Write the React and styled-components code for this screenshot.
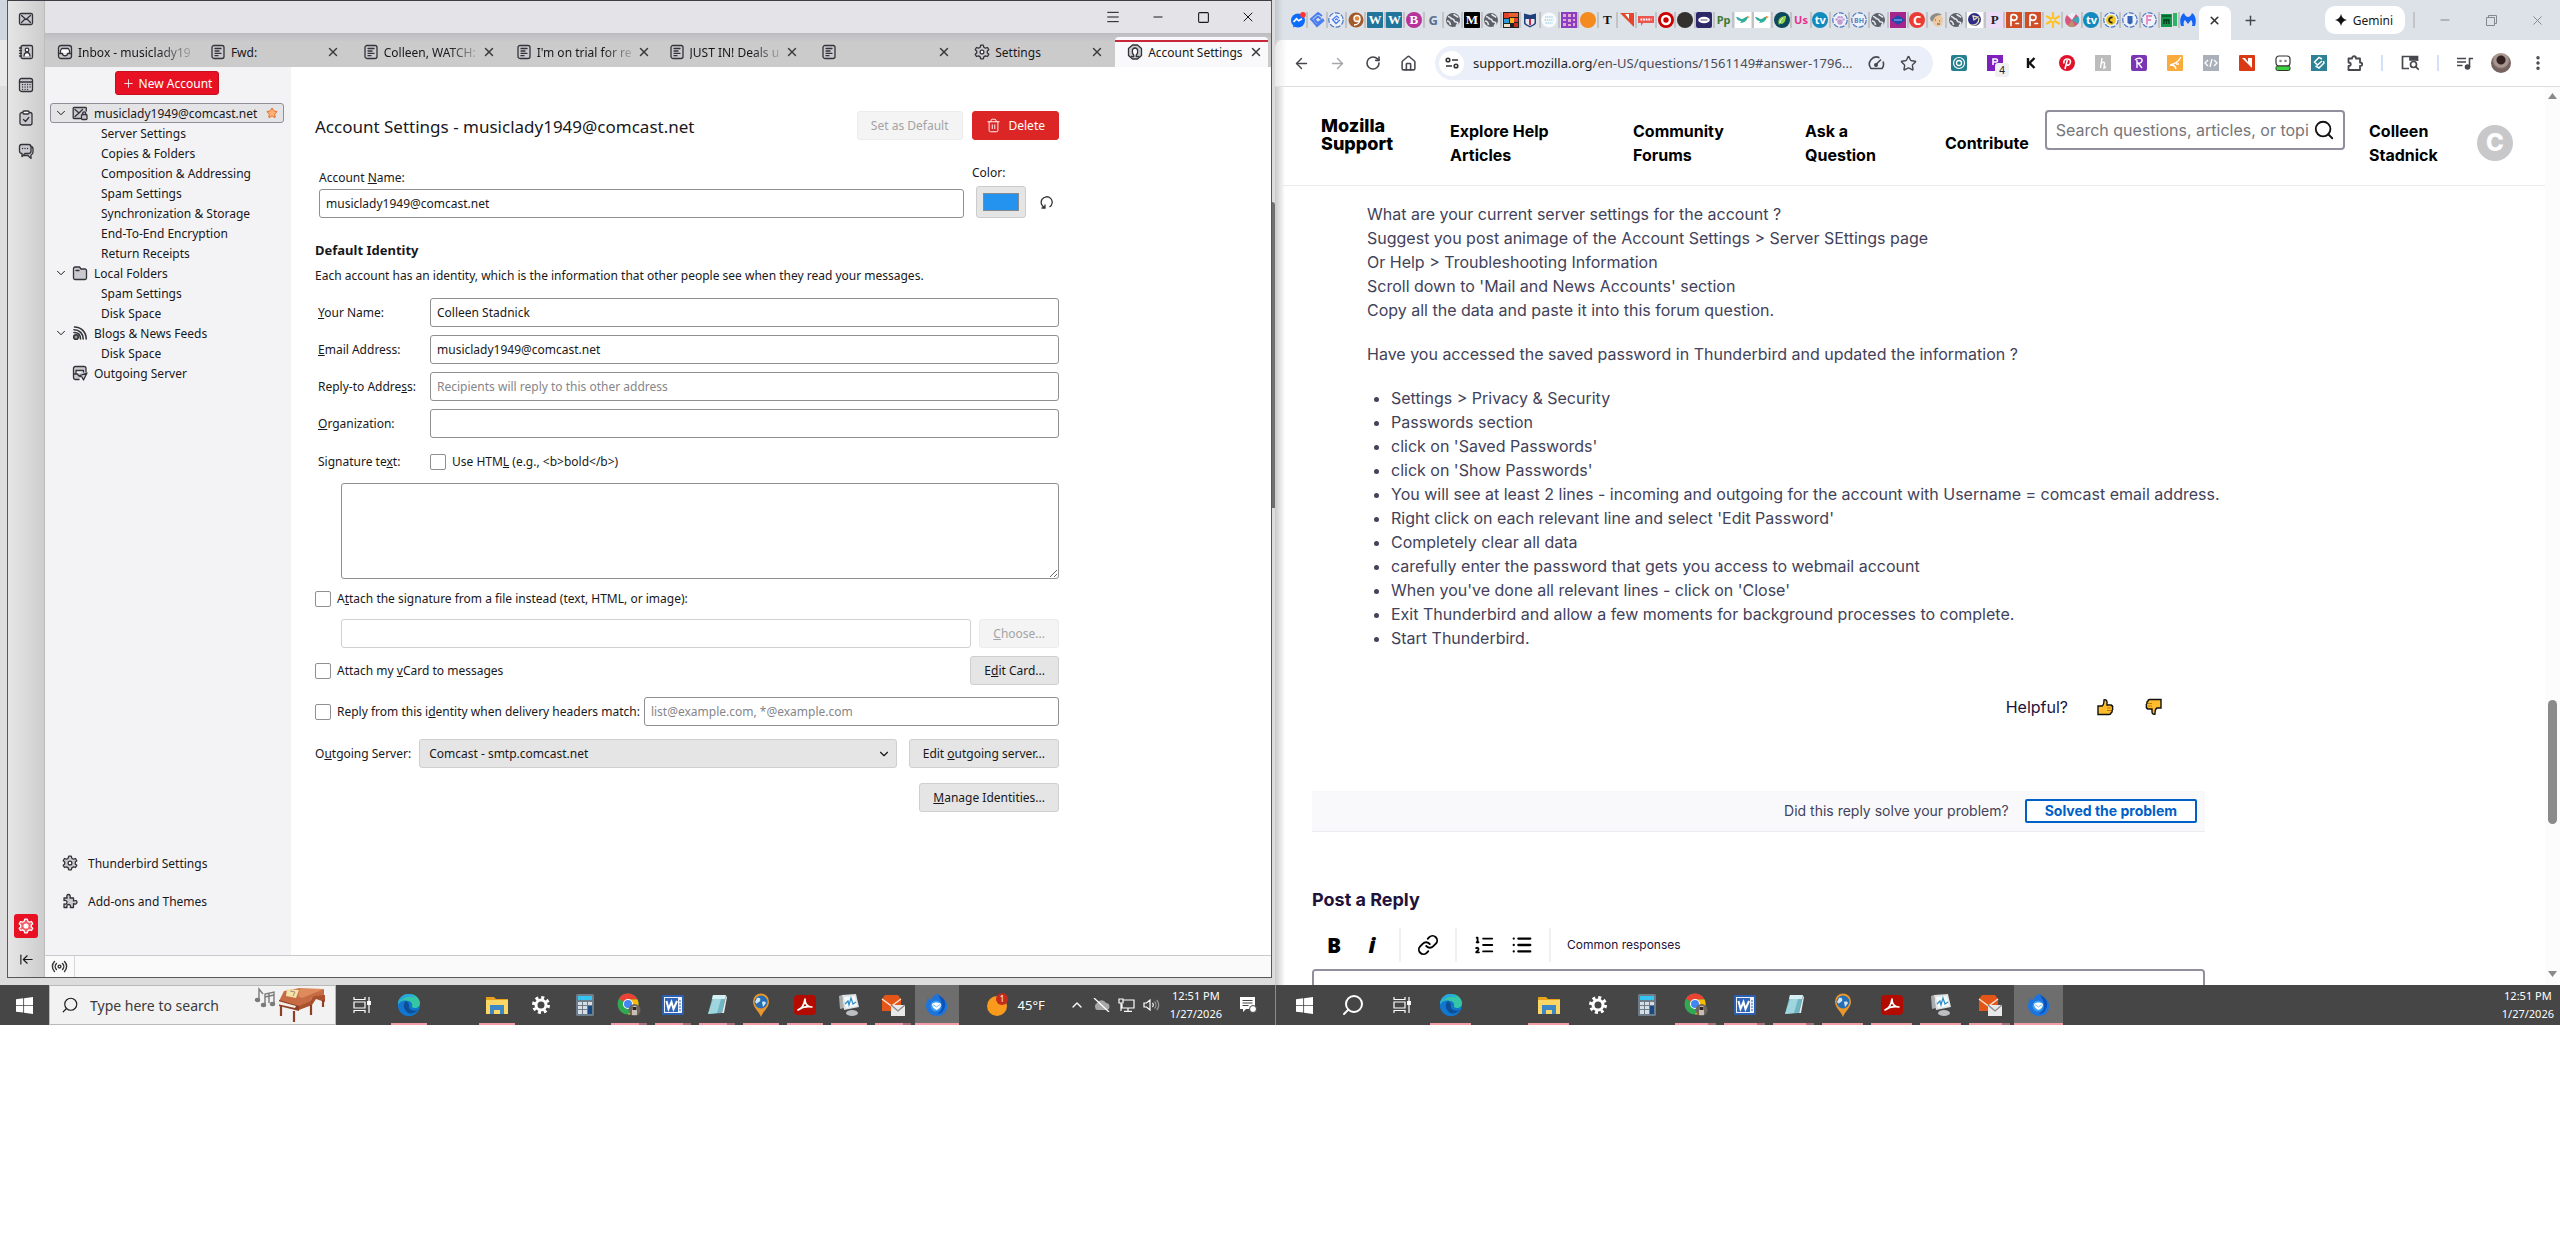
import styled, { createGlobalStyle, css } from "styled-components";
import {
    ArrowLeft, ArrowRight, ChevronDown, ChevronUp, Home, List, ListOrdered, Link,
    Menu, Minus, MoreVertical, Plus, Puzzle, RotateCw, Search, Square,
    Star, Trash2, X, ArrowLeftToLine, Radio,
} from "lucide-react";

const uiFont = `"Noto Sans", "Open Sans", sans-serif`;
const webFont = `Inter, "Liberation Sans", sans-serif`;

/* ---------- data ---------- */

const mailTabs = [
    { icon: "inbox", label: "Inbox - musiclady19", fade: true, fixed: true },
    { icon: "page", label: "Fwd:" },
    { icon: "page", label: "Colleen, WATCH:", fade: true },
    { icon: "page", label: "I'm on trial for re", fade: true },
    { icon: "page", label: "JUST IN! Deals u", fade: true },
    { icon: "page", label: "" },
    { icon: "gear", label: "Settings" },
    { icon: "account", label: "Account Settings", active: true },
];

const accountTree = [
    { icon: "mailLock", label: "musiclady1949@comcast.net", open: true, selected: true },
    { label: "Server Settings" },
    { label: "Copies & Folders" },
    { label: "Composition & Addressing" },
    { label: "Spam Settings" },
    { label: "Synchronization & Storage" },
    { label: "End-To-End Encryption" },
    { label: "Return Receipts" },
    { icon: "folder", label: "Local Folders", open: true },
    { label: "Spam Settings" },
    { label: "Disk Space" },
    { icon: "feed", label: "Blogs & News Feeds", open: true },
    { label: "Disk Space" },
    { icon: "outbox", label: "Outgoing Server" },
];

const favicons = [
    "messenger", "swirl", "swirlRing", "nine", ["W", "#21759b", "#fff", 0, 1], ["W", "#21759b", "#fff", 0, 1],
    ["B", "#b8329b", "#fff", 1, 1], ["G", "", "#5b6f91"], "globe", ["M", "#000", "#fff", 0, 1], "globe", "blocks", "shield", "paleDots",
    "grid", ["", "#f58a1f", "#fff", 1], ["T", "", "#111", 0, 1], "flag", "sale", "target", ["", "#33302d", "#fff", 1], "oval",
    ["Pp", "", "#3c7a35"], "bird", "bird", "leaf", ["Us", "", "#ec2f8c"], ["tv", "#118bbd", "#fff", 1], "paw", "bh", "globe",
    "diamond", ["C", "#ea3b35", "#fff", 1], "face", "globe", "crest", ["P", "#ecdcf8", "#222", 0, 1], "pee",
    "pee", "spark", "wheel", ["tv", "#118bbd", "#fff", 1], "chip", "ringU", "ringF", "fax", "malware",
];

const steps = [
    "Settings > Privacy & Security",
    "Passwords section",
    "click on 'Saved Passwords'",
    "click on 'Show Passwords'",
    "You will see at least 2 lines - incoming and outgoing for the account with Username = comcast email address.",
    "Right click on each relevant line and select 'Edit Password'",
    "Completely clear all data",
    "carefully enter the password that gets you access to webmail account",
    "When you've done all relevant lines - click on 'Close'",
    "Exit Thunderbird and allow a few moments for background processes to complete.",
    "Start Thunderbird.",
];

const pinned = [
    { name: "Edge", icon: "edge", running: true },
    { name: "", icon: "" },
    { name: "File Explorer", icon: "explorer", running: true },
    { name: "Settings", icon: "cog" },
    { name: "Calculator", icon: "calc" },
    { name: "Chrome", icon: "chrome", running: true, many: true },
    { name: "Word", icon: "word", running: true, many: true },
    { name: "Notepad", icon: "notepad", running: true, many: true },
    { name: "Maps", icon: "pin", running: true },
    { name: "Acrobat", icon: "acrobat", running: true },
    { name: "Monitor", icon: "monitor", running: true },
    { name: "Mail", icon: "mail", running: true, many: true },
    { name: "Thunderbird", icon: "bird", running: true, active: true },
];

/* ---------- icons ---------- */

const line = { fill: "#c9c9cf", stroke: "#333338", strokeWidth: 1.3, strokeLinejoin: "round", strokeLinecap: "round" };

const mailIcons = {
    mail: <g {...line}><rect x="1.5" y="2.5" width="13" height="11" rx="1.5" /><path d="M3.5 4.5 8 8.500l4.500-4M3.500 11.500 6.500 8.500M12.500 11.500 9.500 8.500" fill="none" /></g>,
    book: <g {...line}><rect x="3" y="1.5" width="11.5" height="13" rx="1.5" /><path d="M1.500 4h2M1.500 6.700h2M1.500 9.400h2M1.500 12h2" /><circle cx="9" cy="6" r="1.8" fill="#fff" /><path d="M6 12c.3-2.500 1.500-3.500 3-3.500s2.700 1 3 3.500" fill="#fff" /></g>,
    calendar: <g {...line}><rect x="1.5" y="1.5" width="13" height="13" rx="2" /><path d="M1.500 5h13" /><path d="M4.500 7.500h.1M7 7.500h.1M9.500 7.500h.1M12 7.500h.1M4.500 10h.1M7 10h.1M9.500 10h.1M12 10h.1M4.500 12.300h.1M7 12.300h.1M9.500 12.300h.1" /></g>,
    tasks: <g {...line}><rect x="2" y="2.5" width="12" height="12.5" rx="2" /><rect x="5" y="1" width="6" height="3" rx="1" fill="#fff" /><path d="m5.500 9.500 2 2 3.300-4" fill="none" /></g>,
    chat: <g {...line}><path d="M5 12.500h5l3 3v-3.500c1.500-.5 2-1.500 2-3V6c0-1.500-1-2.500-2.500-2.500" /><path d="M3.500 1.500h7c1.500 0 2.500 1 2.500 2.500v4c0 1.500-1 2.500-2.500 2.500H7l-3 3v-3c-1.500 0-2.500-1-2.500-2.500V4c0-1.500.5-2.500 2-2.500z" /><path d="M4.500 5.500h.1M7 5.500h.1M9.500 5.500h.1" /></g>,
    gear: <g {...line}><path d="M6.700 1.200h2.600l.5 2 1.700 1 2-.7 1.300 2.300L13.300 7v2l1.500 1.300-1.300 2.200-2-.6-1.700 1-.5 2H6.700l-.5-2-1.700-1-2 .6-1.300-2.200L2.700 9V7L1.200 5.800l1.300-2.300 2 .7 1.700-1z" /><circle cx="8" cy="8" r="1.9" fill="#fff" /></g>,
    account: <g {...line}><path d="M5.500 1h5L14.500 4.500v7L10.500 15h-5L1.500 11.500v-7z" /><path d="M4.500 12.500h2.300V11C4.800 9.500 4.500 4 8 4s3.200 5.500 1.200 7v1.500h2.300" fill="#fff" /></g>,
    inbox: <g {...line}><rect x="1.5" y="1.5" width="13" height="13" rx="2.5" /><path d="M2 9.500h3.500c0 3 5 3 5 0H14M3.500 9V6.500l1.200-2h6.600l1.200 2V9" fill="#fff" /></g>,
    page: <g {...line}><rect x="2" y="1.5" width="12" height="13" rx="2" /><path d="M5 4.500h6M5 7h4M5 9.300h6M5 11.700h3" /></g>,
    folder: <g {...line}><path d="M1.500 4V13c0 .8.500 1.500 1.500 1.500h10c.8 0 1.500-.7 1.500-1.500V5.500c0-.8-.7-1.500-1.500-1.500H9L7.500 2H3c-1 0-1.500.8-1.500 2z" /><path d="M4 5.500h3" fill="none" /></g>,
    mailLock: <g {...line}><path d="M8.500 13.500H2c-.5 0-.8-.3-.8-.8V3.300c0-.5.300-.8.800-.8h11.500c.5 0 .8.300.8.800V6" /><path d="M3 4.500 7 8 3 11.500M7 8l3.500-3.500" fill="none" /><rect x="9.5" y="9.5" width="5.5" height="5" rx="1" /><path d="M10.700 9.500V8.300c0-2 3-2 3 0v1.200" fill="none" /></g>,
    feed: <g {...line} strokeWidth="1.6" fill="none"><circle cx="4" cy="12" r="2.3" fill="#999" /><path d="M2 7.500c4 0 6.500 2.500 6.500 6.500M2 4.800c5.500 0 9.200 3.700 9.200 9.200M2.500 2c6.500 0 11.700 5 11.700 12" /></g>,
    outbox: <g {...line}><path d="M7 14.500H3.500c-1 0-2-.8-2-2v-9c0-1.200.8-2 2-2h8.500c1.200 0 2 .8 2 2V7" /><path d="M2 9h3.500c.3 1 1 1.800 2 1.800M4 8.500v-3h7.500v1.500" fill="#fff" /><path d="m15 8-3.500 7-1.500-3-3-1.200z" /></g>,
    addon: <g {...line}><path d="M2 5h3.200c-1-2.200-.2-3.500 1.300-3.500S8.800 2.800 7.900 5h3.600v3c2-1 3.500-.2 3.500 1.300s-1.500 2.300-3.500 1.300v3.900H8.300c.7-2-.2-3-1.600-3s-2.300 1-1.600 3H2v-3.700c2 .8 3-.1 3-1.500s-1-2.300-3-1.600z" /></g>,
};

const MailIcon = ({ name, size = 16 }) => (
    <svg width={size} height={size} viewBox="0 0 16 16" aria-hidden="true">{mailIcons[name]}</svg>
);

const ring = <circle cx="8" cy="8" r="7.2" fill="#edf2fb" stroke="#4c76bd" strokeWidth="1.2" strokeDasharray="5 1.5" />;

const favDrawings = {
    messenger: <><circle cx="8" cy="8.5" r="7" fill="#0a6cff" /><path d="M3 15.500 4.500 12l3 2z" fill="#0a6cff" /><path d="m3.500 10 3-3.200 2.300 2 3.200-2" stroke="#fff" strokeWidth="1.7" fill="none" /><circle cx="13" cy="2.8" r="2.8" fill="#f33" /></>,
    swirl: <path d="M13 4 9 1 2 7l6 7 7-6M12 7 9 4.500 5.500 7.500 8.500 11l6-4" fill="none" stroke="#4a7ef0" strokeWidth="2" />,
    swirlRing: <>{ring}<path d="M11 6 8.500 4 4.500 7.500 8 11.500l4-3.500M10 8 8.500 6.800 7 8" fill="none" stroke="#4a7ef0" strokeWidth="1.3" /></>,
    nine: <><circle cx="8" cy="8" r="7.5" fill="#a05a2b" /><circle cx="9" cy="6.5" r="3" stroke="#fff" strokeWidth="1.4" fill="#e88a3c" /><path d="M12 7c0 4-3 6-6 6" stroke="#fff" strokeWidth="1.4" /></>,
    globe: <><circle cx="8" cy="8" r="7" fill="#5c6068" /><path d="M3 4.500c3 0 2 2.500 4.500 2.500S8 10 11 10s1.500 3 0 4M9 2c0 2 3 1.500 4 3.500M2 9c2 0 3 1 3.500 4" stroke="#e3e6ec" strokeWidth="1.7" fill="none" /></>,
    blocks: <><path d="M0 0h16v16H0z" fill="#222" /><path d="M1 1h5v5H1zM11 6h4v4h-4z" fill="#e0432c" /><path d="M6 1h9v4H6z" fill="#e8602b" /><path d="M1 7h5v4H1z" fill="#2e9bd8" /><path d="M7 6h4v5H7z" fill="#f4b428" /><path d="M1 12h6v3H1z" fill="#e8e0c8" /><path d="M11 11h4v4h-4z" fill="#c03028" /></>,
    shield: <><path d="M2 1.500 8 3l6-1.500V11c0 2-4 3-6 4.500C6 14 2 13 2 11z" fill="#20407c" /><path d="M3.500 7h9v4c-1 1.500-3 2-4.500 3-1.500-1-3.500-1.500-4.500-3z" fill="#e6e9f2" /><path d="M8 7v6" stroke="#c5283a" strokeWidth="2" /></>,
    paleDots: <><circle cx="8" cy="8" r="7.5" fill="#f7fbfd" /><path d="M4 5h8M3.500 8h9M4.500 11h7" stroke="#b7d7e5" strokeWidth="1.5" strokeDasharray="1.5 .6" /></>,
    grid: <><path d="M0 0h16v16H0z" fill="#8a3ec2" /><path d="M2 2h3v3H2zM7 2h3v3H7zM12 2h2v3h-2zM2 7h3v2H2zM7 7h3v3H7zM12 7h2v2h-2zM2 11h3v3H2zM7 12h3v2H7zM12 11h2v3h-2z" fill="#e6a9d2" /></>,
    flag: <><path d="M1 1h14v14z" fill="#e4452b" /><path d="m6 2 4 5V2z" fill="#fff" /></>,
    sale: <><path d="M0 4h16v7H5l-2 3v-3H0z" fill="#ec5550" /><path d="M2.500 7.500h11" stroke="#fff" strokeWidth="2.2" strokeDasharray="1.8 .8" /></>,
    target: <><circle cx="8" cy="8" r="8" fill="#cc0000" /><circle cx="8" cy="8" r="5.2" fill="#fff" /><circle cx="8" cy="8" r="2.7" fill="#cc0000" /></>,
    oval: <><rect width="16" height="16" rx="2" fill="#2b2768" /><ellipse cx="8" cy="8" rx="5.8" ry="3.3" fill="#fff" /><path d="M4.500 8h7" stroke="#556" /></>,
    bird: <><path d="M0 0h16v16H0z" fill="#fff" /><path d="M1 5c3 0 4 2 6 2 3 0 3-3 6-2-1 3-3 6-8 6 1-1 1-1.500 1-2C3 9 2 7 1 5z" fill="#2fae9b" /><path d="m12 4 3 1-3 1.500z" fill="#f08a28" /></>,
    leaf: <><circle cx="8" cy="8" r="8" fill="#0b4a5c" /><path d="M5 13c-2-5 1-9 7-9 0 6-3 9-6 7.500z" fill="#8fd14a" /><path d="M6 11c0-2 1-3.500 3-5" stroke="#fff" fill="none" /></>,
    paw: <>{ring}<g fill="#c59ad0"><circle cx="8" cy="10" r="2.7" /><circle cx="4.7" cy="7.5" r="1.2" /><circle cx="6.8" cy="5.2" r="1.3" /><circle cx="9.5" cy="5.2" r="1.3" /><circle cx="11.5" cy="7.5" r="1.2" /></g></>,
    bh: <>{ring}<text x="8" y="10.5" fontSize="7" fontWeight="700" fontFamily={uiFont} textAnchor="middle" fill="#5486c4">BH</text></>,
    diamond: <><path d="M0 0h16v16H0z" fill="#a6248c" /><path d="m1 8 7-5 7 5-7 5z" fill="#1d4cab" /><path d="M4 8h8" stroke="#9cc1ff" /></>,
    face: <><path d="M2 7C2 2 8 0 12 3l2 4-1 6-4 2-4-2z" fill="#f0c8a0" /><path d="M1 7c0-5 8-8 12-4-4 0-7 1-8 4l-2 3z" fill="#8c8c88" /><path d="M6 8h1M10 9h1M8 12h3" stroke="#553" strokeWidth="1.2" /></>,
    crest: <><path d="M0 0h16v16H0z" fill="#fff" /><circle cx="7.5" cy="7.5" r="6.5" fill="#2c2c86" /><path d="M3 13c6 1 9-2 9-7M6 4l5 1-4 3z" stroke="#e8e0b0" fill="none" strokeWidth="1.3" /></>,
    pee: <><path d="M0 0h16v16H0z" fill="#cf4d27" /><path d="M5 13.500V4c0-2 6-2 6 1.500 0 3-4 3.500-5 2M10 11.500h2.500" stroke="#fff" strokeWidth="1.7" strokeLinecap="round" /></>,
    spark: <path d="M8 1v5M8 10v5M2 4.500l4 2.300M10 9.200l4 2.300M14 4.500l-4 2.300M6 9.200l-4 2.300" stroke="#ffc220" strokeWidth="2.2" strokeLinecap="round" />,
    wheel: <><circle cx="8" cy="8" r="7" fill="#d8557f" /><path d="M8 8 3 3a7 7 0 0 1 9-1z" fill="#e8eef2" /><path d="m8 8 6-4a7 7 0 0 1 0 8z" fill="#3aa8b8" /><path d="m8 8 3 6.500a7 7 0 0 1-7-1z" fill="#b8906c" /></>,
    chip: <>{ring}<circle cx="8" cy="8" r="5" fill="#f3c81c" /><path d="M9.500 5.500C5 5 5 11 9.500 10.500" stroke="#222" strokeWidth="1.8" fill="none" /></>,
    ringU: <>{ring}<path d="M5.500 4h5v7l-2.500 1.500L5.500 11z" fill="#3564b8" /></>,
    ringF: <>{ring}<path d="M6 12.500V4h5M6 8h4" stroke="#e88ac0" strokeWidth="1.8" fill="none" /></>,
    fax: <><path d="M0 2h11v13H0z" fill="#14984a" /><path d="M12 1h4v13h-4z" fill="#2cb566" /><path d="M1 4h9" stroke="#06391c" /><path d="M3 12V8h5v4M5.500 8v4" stroke="#06391c" strokeWidth="1.4" /></>,
    malware: <path d="M1 14C-1 7 1 3 4 1c1 3 3 4 4 4s3-1 4-4c3 2 5 6 3 13h-3c1-3 0-5-1-6l-3 4-3-4c-1 1-2 3-1 6z" fill="#1465f5" />,
};

const appIcons = {
    edge: <><circle cx="12" cy="12" r="11" fill="#1276c9" /><path d="M1 12C1 5 6 1 12 1c7 0 11 5 11 9 0 3-2 5-5 5-2 0-3.500-1-3-2 1-3-2-5-5-5C6 8 2 9 1 12z" fill="#35c6a6" /><path d="M1 12C1 5 6 1 11 1c4 0 6 2 7 4C12 2 4 5 1 12z" fill="#27a9e0" /><path d="M1 12C3 8 6 7 9 7.500c4 .5 6 3 5.500 5.500-.5 2 1 4 5 4l2-.5C19 21 15 23 12 23 5 23 1 18 1 12z" fill="#1377cf" /><path d="M9 8c-3 2-3 7 0 10 3 4 8 3 12-1-5 2-10-1-9-4 .3-2-1-4-3-5z" fill="#0c4f96" /></>,
    explorer: <><path d="M1 4h8l2 2h12v15H1z" fill="#e6a21d" /><path d="M1 7h22v14H1z" fill="#fcd766" /><path d="M5 12h14v9h-4v-4H9v4H5z" fill="#3c88c7" /></>,
    cog: <g stroke="#fff" fill="none"><circle cx="12" cy="12" r="5" strokeWidth="3" /><circle cx="12" cy="12" r="7.5" strokeWidth="3" strokeDasharray="3 2.890" /></g>,
    calc: <><rect x="3" y="1" width="18" height="22" rx="1.5" fill="#6d7d8c" /><path d="M5 3h14v4H5z" fill="#35c5f0" /><path d="M5 9h4v3H5zM10 9h4v3h-4zM15 9h4v3h-4zM5 13h4v3H5zM10 13h4v3h-4zM5 17h4v4H5zM10 17h4v4h-4z" fill="#d8dee4" /><path d="M15 13h4v8h-4z" fill="#184a86" /></>,
    chrome: <><circle cx="11" cy="11" r="10.5" fill="#31a852" /><path d="M11 11 1.900 5.750A10.500 10.500 0 0 1 20.500 6.500H11z" fill="#ea4335" /><path d="M11 6.500h9.500A10.500 10.500 0 0 1 11 21.500l4.500-8z" fill="#fbbc05" /><circle cx="11" cy="11" r="5" fill="#fff" /><circle cx="11" cy="11" r="4" fill="#4285f4" /><circle cx="17.5" cy="17" r="6" fill="#6e655f" /><path d="M15 22v-7c1-3 5-3 5 0v7z" fill="#c9beb6" /><path d="M15.500 14h4v3h-4z" fill="#2f2523" /></>,
    word: <><rect x="1" y="2" width="22" height="20" rx="1" fill="#2b5fb0" /><path d="M3 4h18v16H3z" fill="#eef3fb" /><path d="M4 5h13v14H4z" fill="#2f66b8" /><path d="m5.500 8 2 8 3-7 2 7 3.500-8" stroke="#fff" strokeWidth="2" fill="none" /><path d="M18 8h2M18 11h2M18 14h2M18 17h2" stroke="#2b5fb0" /></>,
    notepad: <><path d="M8 2h13l-4 18-14 1z" fill="#6fb7c4" /><path d="M8 2h13l-1 4H7z" fill="#d7f0f3" /><path d="m3 21 5-15 8 0-4 14z" fill="#9fd6dd" /><path d="m17 20 4-17 1 1-3 16z" fill="#e9eded" /></>,
    pin: <><path d="M12 24C10 18 4 15 4 8.500a8 8 0 0 1 16 0C20 15 14 18 12 24z" fill="#e9962c" /><circle cx="12" cy="9" r="6.5" fill="#256eb5" /><path d="M8 5c3-1 4 1 3 3s-3 1-3 3l-2-2zM13 9c2-1 4 0 4 1l-3 4z" fill="#cfe6f4" /></>,
    acrobat: <><rect x="1" y="2" width="22" height="20" rx="4" fill="#b30b00" /><path d="M5 17c3-1 6-5 7-11 0 5 2 8 7 8-5-1-10 0-14 3z" stroke="#fff" strokeWidth="1.6" fill="none" strokeLinejoin="round" /></>,
    monitor: <><path d="M2 3 5 2l2 13-4 1z" fill="#a9adb0" /><path d="m5 2 14-1 3 13-15 3z" fill="#dfe3e6" /><path d="m7 4 11-1 2 10-11 2z" fill="#f5fafc" /><path d="m8 11 3-3 1 4 2-7 2 6 3-2" stroke="#2b8bc8" strokeWidth="1.2" fill="none" /><ellipse cx="15" cy="20" rx="6" ry="3" fill="#bcc0c3" /></>,
    mail: <><path d="M1 6 4 2h13l3 4v12H1z" fill="#e45518" /><path d="m1 6 9.500 7L20 6" stroke="#ffe0cc" strokeWidth="1.5" fill="none" /><path d="M10 12h14v11H10z" fill="#e9e9e9" /><path d="m10 12 7 6 7-6" stroke="#888" strokeWidth="1.3" fill="none" /></>,
    bird: <><path d="M3 4c0 3 2 3 2 3C9 4 8 1 14 1c-1 2 0 2 1 3 6 2 8 7 7 11-1 5-5 8-10 8S1 19 1 13c0-3 1-5 2-9z" fill="#1c74dc" /><path d="M13 2c6 2 9 8 6 14-1 3-4 5-7 5 5-3 8-8 1-19z" fill="#0a52b8" /><circle cx="11" cy="13" r="5.5" fill="#3b9cf0" /><path d="M7 11c2-2 7-2 9 0 0 3-2 5-4.500 6C9 16 7 14 7 11z" fill="#fff" /><path d="m8 11.500 3.500 2.500 3.500-2.500" stroke="#7bbcf2" fill="none" /></>,
};

const WindowsLogo = () => (
    <svg width="17" height="17" viewBox="0 0 16 16" aria-hidden="true">
        <path d="M0 2.200 6.800 1.200v6.300H0zM7.600 1.100 16 0v7.500H7.600zM0 8.300h6.800v6.400L0 13.800zM7.600 8.300H16V16l-8.400-1.200z" fill="#fff" />
    </svg>
);

const TaskViewIcon = () => (
    <svg width="18" height="18" viewBox="0 0 18 18" fill="none" stroke="#fff" strokeWidth="1.2" aria-hidden="true">
        <path d="M1 1v2.500h11V1M1 17v-2.500h11V17M1 6h11v6H1zM16 1v4M16 8.500V17" /><path d="M14.700 5.500h2.600v3h-2.600z" fill="#fff" />
    </svg>
);

const PianoArt = () => (
    <svg width="74" height="36" viewBox="0 0 74 36" aria-hidden="true">
        <g stroke="#7b7b7b" strokeWidth="1.4" fill="#7b7b7b">
            <path d="M5 13V2l4 5" fill="none" /><ellipse cx="3.5" cy="13" rx="2" ry="1.5" />
            <path d="M11 17V7l9-2v12M15 16V6M11 10l9-2" fill="none" /><ellipse cx="9.5" cy="18" rx="2" ry="1.5" /><ellipse cx="18.5" cy="17" rx="2" ry="1.5" />
        </g>
        <path d="M30 4 46 1c7 3 15 3 24 1v7l-10 1c-4 1-3 5-6 7l-9 3-20-6z" fill="#c66b43" />
        <path d="m46 1 24 1-7 3-15 6-4-2z" fill="#dd8a5c" />
        <path d="m25 13 20 6v5l-20-5z" fill="#8e3f24" />
        <path d="m24 14 18 5-1 2-18-4z" fill="#f3efe8" />
        <path d="m45 19 10-4c3-2 2-5 6-6l10-1v7l-9-3-4 6-13 5z" fill="#a9502e" />
        <path d="m33 2 12 1-3 8-10-2z" fill="#f4e3a6" /><path d="m36 4 5 1-2 4" stroke="#a88" fill="none" />
        <path d="M27 19v10M40 24v11M57 18v10M69 13v7" stroke="#8e3f24" strokeWidth="2.2" />
    </svg>
);

/* ---------- global ---------- */

const GlobalStyle = createGlobalStyle`
    * {
        box-sizing: border-box;
    }
    body {
        margin: 0;
        background: #ffffff;
        font-family: ${uiFont};
        font-size: 12px;
        color: #18181b;
    }
    button, input, select, textarea {
        font: inherit;
        color: inherit;
        margin: 0;
    }
    button {
        border: 0;
        padding: 0;
        background: none;
    }
    ul, h1, h2, p {
        margin: 0;
        padding: 0;
    }
    svg {
        display: block;
        flex-shrink: 0;
    }
`;

const Desktop = styled.div`
    display: grid;
    grid-template-columns: 255fr 257fr;
`;

const Monitor = styled.section`
    display: flex;
    flex-direction: column;
    min-width: 0;
`;

/* ---------- mail window ---------- */

const MailArea = styled.div`
    flex: 1;
    display: grid;
    grid-template-columns: 7px 1fr 3px;
    padding-bottom: 7px;
    background: #dcdcdc;
`;

const BackWindowEdge = styled.div`
    background: linear-gradient(#cfd6e0 0 40px, #e9e9e9 40px 86px, #dedede 86px);
`;

const BackScrollThumb = styled.div`
    height: 306px;
    margin-top: 202px;
    border-radius: 0 4px 0 0;
    background: #6f6f6f;
`;

const MailWindow = styled.main`
    display: grid;
    grid-template-columns: 37px 1fr;
    border: 1px solid #57575c;
    border-top-color: #3e3c44;
    background: #ffffff;
    min-width: 0;
`;

const Spaces = styled.nav`
    display: flex;
    flex-direction: column;
    align-items: center;
    gap: 9px;
    padding: 6px 0;
    background: linear-gradient(90deg, #e6e6e6, #cdcdcd);
    border-right: 1px solid #bcbcbc;
`;

const SpaceButton = styled.button`
    display: flex;
    align-items: center;
    justify-content: center;
    width: 24px;
    height: 24px;
    border-radius: 3px;
    ${({ $active }) => $active && css`
        margin-top: auto;
        background: #e81123;
        g {
            stroke: #ffffff;
            fill: #f0606c;
        }
    `}
`;

const MailColumn = styled.div`
    display: flex;
    flex-direction: column;
    min-width: 0;
`;

const TitleBar = styled.header`
    display: flex;
    align-items: center;
    justify-content: flex-end;
    gap: 29px;
    height: 33px;
    padding-right: 15px;
    background: #e3e3e8;
    border-bottom: 1px solid #bdbdc0;
`;

const TabStrip = styled.div`
    display: flex;
    align-items: stretch;
    height: 33px;
    padding: 3px 3px 0 0;
    background: linear-gradient(#bfbfc1, #cbcbcc 8px);
`;

const MailTab = styled.div`
    flex: 1 1 0;
    min-width: 0;
    display: flex;
    align-items: center;
    gap: 5px;
    padding: 0 10px 0 12px;
    border-radius: 4px 4px 0 0;
    background: ${({ $active }) => ($active ? "linear-gradient(#f9f9fb 3px, #c8283a 3px 5px, #f9f9fb 5px)" : "none")};
    button {
        margin-left: auto;
    }
`;

const TabLabel = styled.span`
    white-space: nowrap;
    ${({ $fade }) => $fade && css`
        -webkit-mask-image: linear-gradient(90deg, #000 70%, rgba(0, 0, 0, 0.2));
        mask-image: linear-gradient(90deg, #000 70%, rgba(0, 0, 0, 0.2));
    `}
`;

const MailBody = styled.div`
    flex: 1;
    display: grid;
    grid-template-columns: 246px 1fr;
`;

const Sidebar = styled.aside`
    display: flex;
    flex-direction: column;
    padding: 4px 7px 42px 5px;
    background: #f3f3f6;
`;

const NewAccount = styled.button`
    display: flex;
    align-items: center;
    gap: 4px;
    align-self: center;
    height: 24px;
    padding: 0 6px;
    margin-bottom: 8px;
    border: 1px solid #c50f1f;
    border-radius: 3px;
    background: #e81123;
    color: #ffffff;
`;

const Tree = styled.ul`
    list-style: none;
`;

const TreeRow = styled.button`
    display: flex;
    align-items: center;
    gap: 6px;
    width: 100%;
    height: 20px;
    padding: 0 5px 0 ${({ $child }) => ($child ? 50 : 5)}px;
    border: 1px solid ${({ $selected }) => ($selected ? "#8f8f98" : "transparent")};
    border-radius: 3px;
    background: ${({ $selected }) => ($selected ? "#e4e4e7" : "none")};
    text-align: left;
    white-space: nowrap;
`;

const TwistySlot = styled.span`
    display: flex;
    justify-content: center;
    width: 10px;
`;

const DefaultMark = styled.span`
    margin-left: auto;
`;

const SidebarLinks = styled.div`
    display: flex;
    flex-direction: column;
    gap: 14px;
    margin-top: auto;
    padding-left: 12px;
`;

const SidebarLink = styled.a`
    display: flex;
    align-items: center;
    gap: 10px;
    height: 24px;
    color: inherit;
    text-decoration: none;
`;

const FormPane = styled.div`
    padding: 44px 12px 141px 24px;
`;

const Form = styled.form`
    display: flex;
    flex-direction: column;
    max-width: 744px;
`;

const Row = styled.div`
    display: flex;
    align-items: center;
    gap: ${({ $gap = 8 }) => $gap}px;
    margin-top: ${({ $top = 8 }) => $top}px;
    padding-left: ${({ $indent = 0 }) => $indent}px;
`;

const Spread = styled(Row)`
    justify-content: space-between;
`;

const PageTitle = styled.h1`
    flex: 1;
    padding-top: 3px;
    font-size: 17px;
    line-height: 24px;
    font-weight: 400;
`;

const SectionTitle = styled.h2`
    margin-top: 22px;
    font-size: 13px;
    line-height: 20px;
    font-weight: 700;
`;

const Note = styled.p`
    margin: 6px 0 4px;
    line-height: 20px;
`;

const PushButton = styled.button`
    display: flex;
    align-items: center;
    justify-content: center;
    gap: 8px;
    height: 29px;
    padding: 0 13px;
    border: 1px solid #cfcfcf;
    border-radius: 3px;
    background: #e5e5e5;
    white-space: nowrap;
    &:disabled {
        border-color: #ececec;
        background: #f4f4f4;
        color: #a3a3a6;
    }
    ${({ $danger }) => $danger && css`
        border-color: #dc2626;
        background: #dc2626;
        color: #ffffff;
    `}
`;

const textBox = css`
    border: 1px solid #8f8f94;
    border-radius: 3px;
    background: #ffffff;
    &:disabled {
        border-color: #d0d0d3;
    }
    &::placeholder {
        color: #85858a;
    }
`;

const TextInput = styled.input`
    ${textBox}
    flex: 1;
    min-width: 0;
    height: 29px;
    padding: 0 6px;
`;

const SignatureBox = styled.textarea`
    ${textBox}
    height: 96px;
    margin: 13px 0 3px 26px;
    resize: both;
`;

const FieldLabel = styled.label`
    width: 112px;
    padding-left: 3px;
    margin-right: -5px;
    white-space: nowrap;
`;

const NameGrid = styled.div`
    display: grid;
    grid-template-columns: 1fr 87px;
    column-gap: 8px;
    align-items: end;
    margin-top: 24px;
    padding-left: 4px;
`;

const StackLabel = styled.label`
    display: block;
    padding-bottom: ${({ $low }) => ($low ? 3 : 5)}px;
    line-height: 17px;
`;

const NameField = styled.div`
    display: flex;
    flex-direction: column;
    input {
        flex: none;
    }
`;

const ColorRow = styled.div`
    display: flex;
    align-items: center;
    justify-content: space-between;
    height: 32px;
    padding: 0 4px;
`;

const ColorInput = styled.input`
    width: 50px;
    height: 32px;
    padding: 6px;
    border: 1px solid #cccccc;
    border-radius: 3px;
    background: #e5e5e5;
    &::-webkit-color-swatch-wrapper {
        padding: 0;
    }
    &::-webkit-color-swatch {
        border: 1px solid #84898f;
        border-radius: 0;
    }
`;

const IconButton = styled.button`
    display: flex;
    align-items: center;
    justify-content: center;
    min-width: 16px;
`;

const CheckLabel = styled.label`
    display: flex;
    align-items: center;
    gap: 6px;
    white-space: nowrap;
    input {
        appearance: none;
        width: 16px;
        height: 16px;
        border: 1px solid #8f8f94;
        border-radius: 2px;
        background: #ffffff;
    }
`;

const SelectWrap = styled.div`
    position: relative;
    flex: 1;
    margin-right: 4px;
    svg {
        position: absolute;
        right: 6px;
        top: 8px;
        pointer-events: none;
    }
`;

const ServerSelect = styled.select`
    appearance: none;
    width: 100%;
    height: 29px;
    padding: 0 9px;
    border: 1px solid #cfcfcf;
    border-radius: 3px;
    background: #e5e5e5;
`;

const StatusBar = styled.footer`
    display: flex;
    align-items: center;
    height: 22px;
    border-top: 1px solid #c9c9cc;
    background: #fafafa;
`;

const StatusCell = styled.div`
    display: flex;
    align-items: center;
    height: 100%;
    padding: 0 6px;
    border-right: 1px solid #d8d8da;
`;

const Grow = styled.div`
    flex: 1;
`;

/* ---------- browser window ---------- */

const Browser = styled.main`
    flex: 1;
    display: flex;
    flex-direction: column;
    background: linear-gradient(90deg, #c9c9c9, #ffffff 10px);
`;

const ChromeTabs = styled.header`
    display: flex;
    align-items: center;
    height: 40px;
    padding: 0 15px 0 14px;
    background: linear-gradient(90deg, #c2c7ce, #dde1e8 8px);
`;

const FaviconRow = styled.div`
    flex: 1;
    min-width: 0;
    display: flex;
`;

const FaviconTab = styled.button`
    flex: 1 1 0;
    min-width: 0;
    display: flex;
    align-items: center;
    justify-content: center;
    height: 16px;
    border-right: 2px solid #c3c3c6;
    &:last-child {
        border-color: transparent;
    }
`;

const LetterIcon = styled.span`
    flex: none;
    width: 16px;
    height: 16px;
    border-radius: ${({ $round }) => ($round ? "50%" : "1px")};
    background: ${({ $bg }) => $bg || "transparent"};
    color: ${({ $fg }) => $fg};
    font-family: ${({ $serif }) => ($serif ? `"Liberation Serif", serif` : uiFont)};
    font-size: ${({ $small }) => ($small ? 11 : 13)}px;
    line-height: 16px;
    font-weight: 700;
    text-align: center;
`;

const ActiveTab = styled.div`
    display: flex;
    align-items: center;
    justify-content: center;
    align-self: flex-end;
    width: 32px;
    height: 34px;
    padding-bottom: 6px;
    border-radius: 8px 8px 0 0;
    background: #ffffff;
`;

const WindowTools = styled.div`
    display: flex;
    align-items: center;
    gap: 30px;
    margin-left: ${({ $left = 12 }) => $left}px;
    color: #85888d;
`;

const GeminiButton = styled.button`
    display: flex;
    align-items: center;
    gap: 6px;
    height: 28px;
    margin: 0 8px 0 66px;
    padding: 0 12px 0 10px;
    border-radius: 10px;
    background: #ffffff;
`;

const Divider = styled.span`
    width: 2px;
    height: ${({ $tall }) => ($tall ? 34 : 16)}px;
    background: ${({ $color = "#d3e0fb" }) => $color};
`;

const Toolbar = styled.div`
    display: flex;
    align-items: center;
    gap: 18px;
    height: 47px;
    padding: 0 13px 0 18px;
    border-bottom: 1px solid #dcdee2;
    border-radius: 8px 8px 0 0;
    background: linear-gradient(90deg, #e8e8e8, #ffffff 12px);
    color: #46484d;
`;

const NavButtons = styled.div`
    display: flex;
    gap: 19px;
`;

const Omnibox = styled.div`
    flex: 1;
    display: flex;
    align-items: center;
    gap: 9px;
    height: 34px;
    padding: 0 16px 0 4px;
    border-radius: 17px;
    background: #ebeff9;
`;

const SiteInfo = styled.button`
    display: flex;
    align-items: center;
    justify-content: center;
    width: 25px;
    height: 25px;
    border-radius: 50%;
    background: #ffffff;
`;

const Address = styled.span`
    flex: 1;
    font-size: 13px;
    white-space: nowrap;
    color: #4a4d53;
    b {
        font-weight: 400;
        color: #1d1f23;
    }
`;

const OmniboxTools = styled.div`
    display: flex;
    align-items: center;
    gap: 15px;
`;

const Extensions = styled.div`
    display: flex;
    gap: 20px;
`;

const ExtButton = styled.button`
    position: relative;
    display: flex;
    align-items: center;
    justify-content: center;
    width: 16px;
    height: 16px;
`;

const Badge = styled.span`
    position: absolute;
    left: 8px;
    top: 8px;
    width: 14px;
    height: 14px;
    border-radius: 3px;
    background: #f0f0f2;
    color: #222222;
    font-size: 10px;
    line-height: 14px;
`;

const Avatar = styled.span`
    width: 20px;
    height: 20px;
    border-radius: 50%;
    background: radial-gradient(circle at 50% 35%, #33211f 0 4px, #a89690 5px 7px, #76625e 9px);
`;

const Viewport = styled.div`
    flex: 1;
    display: grid;
    grid-template-columns: 1fr 15px;
`;

const Page = styled.div`
    font-family: ${webFont};
    font-size: 16px;
    line-height: 24px;
    color: #42425a;
    min-width: 0;
`;

const SiteHeader = styled.header`
    display: flex;
    align-items: center;
    height: 99px;
    margin-left: 5px;
    padding: 14px 32px 0 41px;
    border-bottom: 1px solid #ebebee;
    color: #000000;
`;

const SiteLogo = styled.a`
    display: flex;
    flex-direction: column;
    flex: 0 0 129px;
    padding-bottom: 16px;
    font-size: 18px;
    line-height: 18px;
    font-weight: 800;
    color: inherit;
    text-decoration: none;
`;

const SiteLink = styled.a`
    flex: 0 0 ${({ $basis }) => $basis}px;
    padding-right: ${({ $pad = 0 }) => $pad}px;
    font-weight: 700;
    color: inherit;
    text-decoration: none;
`;

const SearchBox = styled.div`
    flex: 1;
    display: flex;
    align-items: center;
    height: 40px;
    margin: 0 24px 26px 16px;
    padding: 0 8px 0 9px;
    border: 2px solid #8f8f9d;
    border-radius: 4px;
    background: #ffffff;
    input {
        flex: 1;
        min-width: 0;
        border: 0;
        padding: 0;
        outline: none;
    }
    input::placeholder {
        color: #76767a;
    }
`;

const UserBadge = styled.span`
    width: 36px;
    height: 36px;
    margin-left: auto;
    border-radius: 50%;
    background: #c8c8ca;
    color: #ffffff;
    font-size: 24px;
    line-height: 36px;
    font-weight: 800;
    text-align: center;
`;

const Answer = styled.article`
    padding: 16px 24px 0 92px;
`;

const Paragraph = styled.p`
    margin-bottom: 20px;
`;

const Steps = styled.ul`
    margin: 0;
    padding-left: 24px;
`;

const Replies = styled.div`
    display: flex;
    flex-direction: column;
    margin: 0 340px 0 37px;
`;

const Helpful = styled.div`
    display: flex;
    align-items: center;
    justify-content: flex-end;
    gap: 29px;
    padding: 45px 43px 72px 0;
    color: #20123a;
`;

const SolvedBar = styled.div`
    display: flex;
    align-items: center;
    justify-content: flex-end;
    gap: 16px;
    height: 41px;
    padding-right: 8px;
    border-bottom: 1px solid #ececf0;
    background: #f9f9fb;
    font-size: 14px;
`;

const SolvedButton = styled.button`
    height: 24px;
    padding: 0 18px;
    border: 2px solid #0060c7;
    border-radius: 2px;
    background: #ffffff;
    color: #0060c7;
    font-weight: 700;
    line-height: 18px;
`;

const ReplyTitle = styled.h2`
    margin: 56px 0 16px;
    font-size: 18px;
    font-weight: 700;
    color: #20123a;
`;

const EditorTools = styled.div`
    display: flex;
    align-items: center;
    gap: 16px;
    height: 34px;
    padding-left: 11px;
    margin-bottom: 7px;
    color: #000000;
`;

const ToolButton = styled.button`
    display: flex;
    align-items: center;
    justify-content: center;
    width: 22px;
    height: 22px;
    font-family: "Open Sans", sans-serif;
    font-size: 21px;
    line-height: 22px;
    font-weight: 800;
    font-style: ${({ $italic }) => ($italic ? "italic" : "normal")};
`;

const CommonResponses = styled.button`
    font-size: 12px;
    color: #20123a;
`;

const ReplyBox = styled.textarea`
    display: block;
    width: 100%;
    height: 16px;
    border: 2px solid #8f8f9d;
    border-bottom: 0;
    border-radius: 4px 4px 0 0;
    resize: none;
`;

const Scrollbar = styled.div`
    display: flex;
    flex-direction: column;
    align-items: center;
    padding: 6px 0 8px;
    background: #fcfcfc;
`;

const ScrollThumb = styled.div`
    width: 9px;
    height: 124px;
    margin: 601px 0 auto;
    border-radius: 5px;
    background: #8a8a8a;
`;

/* ---------- taskbar ---------- */

const Bar = styled.footer`
    display: flex;
    align-items: stretch;
    height: 40px;
    padding-left: ${({ $wide }) => ($wide ? 4 : 0)}px;
    border-left: ${({ $wide }) => ($wide ? "1px solid #8c8c8c" : "0")};
    background: #464646;
    color: #ffffff;
`;

const BarCell = styled.button`
    display: flex;
    align-items: center;
    justify-content: center;
    flex: 0 0 ${({ $width }) => $width}px;
    padding: 0;
    background: ${({ $active }) => ($active ? "#6e6e6e" : "transparent")};
    ${({ $running, $active, $many }) => $running && css`
        border: solid transparent;
        border-width: 0 ${$active ? 0 : 4}px;
        background-clip: padding-box;
        background-image: linear-gradient(90deg, #f29ca6 ${$many ? "calc(100% - 8px)" : "100%"}, #a9727a 0);
        background-size: 100% 2px;
        background-position: bottom;
        background-repeat: no-repeat;
    `}
`;

const SearchField = styled.label`
    display: flex;
    align-items: center;
    gap: 11px;
    flex: 0 0 287px;
    min-width: 0;
    padding: 0 7px 0 11px;
    border: 1px solid #b9b9b9;
    background: #f2f2f2;
    color: #222222;
    input {
        flex: 1;
        min-width: 0;
        border: 0;
        padding: 0;
        background: none;
        font-size: 14px;
        outline: none;
    }
    input::placeholder {
        color: #3a3a3a;
    }
`;

const Lens = styled(Search)`
    transform: scaleX(-1);
`;

const Tray = styled.div`
    display: flex;
    align-items: center;
    gap: 8px;
    margin-left: auto;
    padding-right: ${({ $end = 4 }) => $end}px;
`;

const Weather = styled.button`
    display: flex;
    align-items: center;
    gap: 8px;
    margin-right: 16px;
    font-size: 13px;
`;

const Clock = styled.div`
    margin: 0 2px;
    font-size: 11px;
    line-height: 18px;
    text-align: center;
    white-space: nowrap;
`;

const Notifications = styled.button`
    margin-left: 7px;
`;

/* ---------- components ---------- */

function Favicon({ icon }) {
    if (Array.isArray(icon)) {
        const [letter, bg, fg, round, serif] = icon;
        return <LetterIcon $bg={bg} $fg={fg} $round={round} $serif={serif} $small={letter.length > 1}>{letter}</LetterIcon>;
    }
    return <svg width="16" height="16" viewBox="0 0 16 16" fill="none" aria-hidden="true">{favDrawings[icon]}</svg>;
}

function Tab({ icon, label, fade, fixed, active }) {
    return (
        <MailTab $active={active}>
            <MailIcon name={icon} />
            <TabLabel $fade={fade}>{label}</TabLabel>
            {!fixed && <IconButton aria-label="Close tab"><X size={14} strokeWidth={2.5} color="#3b3b3d" /></IconButton>}
        </MailTab>
    );
}

function AccountSidebar() {
    return (
        <Sidebar>
            <NewAccount><Plus size={13} strokeWidth={1.5} />New Account</NewAccount>
            <Tree>
                {accountTree.map((item, i) => (
                    <li key={i}>
                        <TreeRow $child={!item.icon} $selected={item.selected}>
                            {item.icon && <TwistySlot>{item.open && <ChevronDown size={14} strokeWidth={1.7} />}</TwistySlot>}
                            {item.icon && <MailIcon name={item.icon} />}
                            <span>{item.label}</span>
                            {item.selected && <DefaultMark><Star size={12} color="#e0691c" fill="#ffb27a" /></DefaultMark>}
                        </TreeRow>
                    </li>
                ))}
            </Tree>
            <SidebarLinks>
                <SidebarLink href="#settings"><MailIcon name="gear" />Thunderbird Settings</SidebarLink>
                <SidebarLink href="#addons"><MailIcon name="addon" />Add-ons and Themes</SidebarLink>
            </SidebarLinks>
        </Sidebar>
    );
}

function AccountForm() {
    return (
        <FormPane>
            <Form>
                <Row $top={0} $gap={9}>
                    <PageTitle>Account Settings - musiclady1949@comcast.net</PageTitle>
                    <PushButton type="button" disabled>Set as Default</PushButton>
                    <PushButton type="button" $danger><Trash2 size={15} strokeWidth={1.5} />Delete</PushButton>
                </Row>
                <NameGrid>
                    <NameField>
                        <StackLabel htmlFor="acctName" $low>Account <u>N</u>ame:</StackLabel>
                        <TextInput id="acctName" defaultValue="musiclady1949@comcast.net" />
                    </NameField>
                    <div>
                        <StackLabel htmlFor="acctColor">Color:</StackLabel>
                        <ColorRow>
                            <ColorInput id="acctColor" type="color" defaultValue="#2493ef" />
                            <IconButton type="button" aria-label="Reset color">
                                <svg width="14" height="14" viewBox="0 0 14 14" fill="none" stroke="#333" strokeWidth="1.3"><path d="M1.500 13h3.500v-3.500M5 12.500A5.500 5.500 0 1 1 9.500 12" /></svg>
                            </IconButton>
                        </ColorRow>
                    </div>
                </NameGrid>
                <SectionTitle>Default Identity</SectionTitle>
                <Note>Each account has an identity, which is the information that other people see when they read your messages.</Note>
                <Row>
                    <FieldLabel htmlFor="yourName"><u>Y</u>our Name:</FieldLabel>
                    <TextInput id="yourName" defaultValue="Colleen Stadnick" />
                </Row>
                <Row>
                    <FieldLabel htmlFor="email"><u>E</u>mail Address:</FieldLabel>
                    <TextInput id="email" defaultValue="musiclady1949@comcast.net" />
                </Row>
                <Row>
                    <FieldLabel htmlFor="replyTo">Reply-to Addre<u>s</u>s:</FieldLabel>
                    <TextInput id="replyTo" placeholder="Recipients will reply to this other address" />
                </Row>
                <Row>
                    <FieldLabel htmlFor="org"><u>O</u>rganization:</FieldLabel>
                    <TextInput id="org" />
                </Row>
                <Row $top={15}>
                    <FieldLabel htmlFor="signature">Signature te<u>x</u>t:</FieldLabel>
                    <CheckLabel><input type="checkbox" /><span>Use HTM<u>L</u> (e.g., &lt;b&gt;bold&lt;/b&gt;)</span></CheckLabel>
                </Row>
                <SignatureBox id="signature" />
                <Row>
                    <CheckLabel><input type="checkbox" /><span>A<u>t</u>tach the signature from a file instead (text, HTML, or image):</span></CheckLabel>
                </Row>
                <Row $top={12} $indent={26}>
                    <TextInput disabled aria-label="Signature file" />
                    <PushButton type="button" disabled><span><u>C</u>hoose...</span></PushButton>
                </Row>
                <Spread>
                    <CheckLabel><input type="checkbox" /><span>Attach my <u>v</u>Card to messages</span></CheckLabel>
                    <PushButton type="button"><span>E<u>d</u>it Card...</span></PushButton>
                </Spread>
                <Row $top={12} $gap={4}>
                    <CheckLabel><input type="checkbox" /><span>Reply from this i<u>d</u>entity when delivery headers match:</span></CheckLabel>
                    <TextInput placeholder="list@example.com, *@example.com" aria-label="Delivery headers" />
                </Row>
                <Row $top={13}>
                    <label htmlFor="smtp">O<u>u</u>tgoing Server:</label>
                    <SelectWrap>
                        <ServerSelect id="smtp"><option>Comcast - smtp.comcast.net</option></ServerSelect>
                        <ChevronDown size={14} strokeWidth={2} />
                    </SelectWrap>
                    <PushButton type="button"><span>Edit <u>o</u>utgoing server...</span></PushButton>
                </Row>
                <Spread $top={15}>
                    <Grow />
                    <PushButton type="button"><span><u>M</u>anage Identities...</span></PushButton>
                </Spread>
            </Form>
        </FormPane>
    );
}

function Thunderbird() {
    return (
        <MailArea>
            <BackWindowEdge />
            <MailWindow>
                <Spaces>
                    {["mail", "book", "calendar", "tasks", "chat"].map((name) => (
                        <SpaceButton key={name} aria-label={name}><MailIcon name={name} /></SpaceButton>
                    ))}
                    <SpaceButton $active aria-label="Settings"><MailIcon name="gear" /></SpaceButton>
                    <SpaceButton aria-label="Collapse"><ArrowLeftToLine size={15} strokeWidth={1.8} /></SpaceButton>
                </Spaces>
                <MailColumn>
                    <TitleBar>
                        <IconButton aria-label="Menu"><Menu size={16} strokeWidth={1.5} /></IconButton>
                        <IconButton aria-label="Minimize"><Minus size={14} strokeWidth={1.7} /></IconButton>
                        <IconButton aria-label="Maximize"><Square size={13} strokeWidth={2} /></IconButton>
                        <IconButton aria-label="Close"><X size={16} strokeWidth={1.5} /></IconButton>
                    </TitleBar>
                    <TabStrip>
                        {mailTabs.map((tab, i) => <Tab key={i} {...tab} />)}
                    </TabStrip>
                    <MailBody>
                        <AccountSidebar />
                        <AccountForm />
                    </MailBody>
                    <StatusBar>
                        <StatusCell><Radio size={17} strokeWidth={2} color="#333" /></StatusCell>
                    </StatusBar>
                </MailColumn>
            </MailWindow>
            <BackScrollThumb />
        </MailArea>
    );
}

const extensions = [
    ["Swirl", <><rect width="16" height="16" rx="2" fill="#257f8e" /><circle cx="8" cy="8" r="5.5" stroke="#fff" strokeWidth="1.2" /><circle cx="8" cy="8" r="2.5" stroke="#fff" strokeWidth="1.3" /></>],
    ["Privacy", <><path d="M0 0h16v16H0z" fill="#7d20bd" /><path d="M6 10V4h3c2 0 2 3 0 3H6" stroke="#fff" strokeWidth="1.6" /></>, "4"],
    ["Klarna", <path d="M5 3v10M11.500 3 6.500 8l5 5" stroke="#111" strokeWidth="2.4" />],
    ["Pinterest", <><circle cx="8" cy="8" r="8" fill="#e0112b" /><path d="M6 14 8.300 5M5 8.500C3.500 3 12 2.500 11.500 7c-.3 3-3 4-4 2.300" stroke="#fff" strokeWidth="1.6" /></>],
    ["Honey", <><path d="M0 0h16v16H0z" fill="#bcbcbc" /><path d="M7 3 5.500 13M6 9c2-3 4-2 3.500 0L9 13l2-1" stroke="#fff" strokeWidth="1.4" /></>],
    ["Rakuten", <><rect width="16" height="16" rx="2" fill="#7a35b5" /><path d="M6 13V5M4 5c3-3 8-2 7 1s-4 2-4 2l4 5" stroke="#fff" strokeWidth="1.4" /></>],
    ["Kite", <><rect width="16" height="16" rx="1" fill="#fbab3c" /><path d="M14 2C12 6 8 9 3 10c3 0 5 0 6 4M9 9l3 0" stroke="#fff" strokeWidth="1.5" /></>],
    ["Code", <><path d="M0 0h16v16H0z" fill="#aab0b9" /><path d="m5 5-3 3 3 3M11 5l3 3-3 3M9 4l-2 8" stroke="#fff" strokeWidth="1.3" /></>],
    ["Flag", <><rect width="16" height="16" rx="1" fill="#d93a15" /><path d="M3 3h10v10z" fill="#fff" /><path d="M6 3h3v4z" fill="#d93a15" /></>],
    ["Robot", <><rect x="1" y="1" width="14" height="10" rx="3" fill="#fff" stroke="#333" strokeWidth="1.2" /><circle cx="5.5" cy="6" r="1.3" fill="#888" /><circle cx="10.5" cy="6" r="1.3" fill="#888" /><rect x="1" y="11" width="14" height="4.5" rx="1.5" fill="#3bd23f" stroke="#333" /></>],
    ["Clip", <><path d="M0 0h16v16H0z" fill="#2d8295" /><path d="M11 4 8 2.500 3.500 7l3 3L11 6M12.500 6 13 8l-5 5-3.500-2" stroke="#fff" strokeWidth="1.5" /></>],
];

function ChromeWindow() {
    return (
        <Browser>
            <ChromeTabs>
                <FaviconRow>
                    {favicons.map((icon, i) => (
                        <FaviconTab key={i} aria-label={`Tab ${i + 1}`}><Favicon icon={icon} /></FaviconTab>
                    ))}
                </FaviconRow>
                <ActiveTab><IconButton aria-label="Close tab"><X size={13} strokeWidth={3} color="#333" /></IconButton></ActiveTab>
                <WindowTools>
                    <IconButton aria-label="New tab"><Plus size={15} strokeWidth={2.3} color="#46484d" /></IconButton>
                </WindowTools>
                <GeminiButton>
                    <svg width="12" height="12" viewBox="0 0 12 12"><path d="M6 0c.8 3.500 2.500 5.200 6 6-3.500.8-5.200 2.500-6 6-.8-3.500-2.500-5.200-6-6 3.500-.8 5.200-2.500 6-6z" fill="#111" /></svg>
                    Gemini
                </GeminiButton>
                <Divider $color="#c3c5ca" />
                <WindowTools $left={22}>
                    <IconButton aria-label="Minimize"><Minus size={14} strokeWidth={1.7} /></IconButton>
                    <IconButton aria-label="Restore"><svg width="11" height="11" viewBox="0 0 11 11" fill="none" stroke="currentColor"><path d="M.5 2.500h8v8h-8zM2.500 2.500v-2h8v8h-2" /></svg></IconButton>
                    <IconButton aria-label="Close"><X size={15} strokeWidth={1.6} /></IconButton>
                </WindowTools>
            </ChromeTabs>
            <Toolbar>
                <NavButtons>
                    <IconButton aria-label="Back"><ArrowLeft size={17} /></IconButton>
                    <IconButton aria-label="Forward"><ArrowRight size={17} color="#a5a7ab" /></IconButton>
                    <IconButton aria-label="Reload"><RotateCw size={16} strokeWidth={2.4} /></IconButton>
                    <IconButton aria-label="Home"><Home size={17} strokeWidth={2.2} /></IconButton>
                </NavButtons>
                <Omnibox>
                    <SiteInfo aria-label="Site information">
                        <svg width="14" height="12" viewBox="0 0 14 12" fill="none" stroke="#333" strokeWidth="1.6"><circle cx="3" cy="3" r="1.8" /><path d="M7 3h6M1 9h6" /><circle cx="11" cy="9" r="1.8" /></svg>
                    </SiteInfo>
                    <Address><b>support.mozilla.org</b>/en-US/questions/1561149#answer-1796...</Address>
                    <OmniboxTools>
                        <svg width="17" height="14" viewBox="0 0 17 14" fill="none" stroke="#46484d" strokeWidth="1.6"><path d="M11.500 1.800A7 7 0 0 0 3 12.500h11a7 7 0 0 0 1-7M7.500 9 13 3.500" /><circle cx="8" cy="9" r="1.2" fill="#46484d" /></svg>
                        <Star size={17} />
                    </OmniboxTools>
                </Omnibox>
                <Extensions>
                    {extensions.map(([name, art, badge]) => (
                        <ExtButton key={name} aria-label={name}>
                            <svg width="16" height="16" viewBox="0 0 16 16" fill="none">{art}</svg>
                            {badge && <Badge>{badge}</Badge>}
                        </ExtButton>
                    ))}
                    <ExtButton aria-label="Extensions">
                        <svg width="16" height="16" viewBox="0 0 16 16" fill="none" stroke="#46484d" strokeWidth="1.8" strokeLinejoin="round"><path d="M1.500 3.500H5C5 .5 9 .5 9 3.500h4v4c3 0 3 3.500 0 3.500v4H1.500v-4c3 0 3-3.500 0-3.500z" /></svg>
                    </ExtButton>
                </Extensions>
                <Divider />
                <IconButton aria-label="Search tabs">
                    <svg width="18" height="16" viewBox="0 0 18 16" fill="none" stroke="#46484d" strokeWidth="1.7"><path d="M8 13.500H1.500v-12h15V6" /><path d="M9 2h7v3H9z" fill="#46484d" /><circle cx="12.5" cy="9.5" r="3" /><path d="m14.700 11.700 3 3" /></svg>
                </IconButton>
                <Divider />
                <IconButton aria-label="Media">
                    <svg width="16" height="13" viewBox="0 0 16 13" fill="none" stroke="#46484d" strokeWidth="1.6"><path d="M0 1.500h9M0 5h9M0 8.500h5.500M12.500 10V1.500H16" /><circle cx="10.5" cy="10" r="2" fill="#46484d" /></svg>
                </IconButton>
                <Avatar />
                <IconButton aria-label="Menu"><MoreVertical size={18} strokeWidth={2.6} /></IconButton>
            </Toolbar>
            <Viewport>
                <SupportPage />
                <Scrollbar>
                    <svg width="9" height="6" viewBox="0 0 9 6"><path d="M0 6 4.500 0 9 6z" fill="#8a8a8a" /></svg>
                    <ScrollThumb />
                    <svg width="9" height="6" viewBox="0 0 9 6"><path d="M0 0 4.500 6 9 0z" fill="#8a8a8a" /></svg>
                </Scrollbar>
            </Viewport>
        </Browser>
    );
}

const thumb = "M1 8h4c2-1 2-3 2-6 2-1 3 1 3 2v3h4c2 1 2 2 1.500 3 .5 1 .3 2-.5 2.500.3 1 0 2-1 2.300 0 1.200-.5 1.700-2 1.700H1z";

const ThumbArt = () => (
    <>
        <path d={thumb} fill="#ffbd2e" stroke="#111" strokeWidth="1.4" />
        <path d="M10 10h4M10 12.500h4" stroke="#b97a10" />
    </>
);

function SupportPage() {
    return (
        <Page>
            <SiteHeader>
                <SiteLogo href="#home"><span>Mozilla</span><span>Support</span></SiteLogo>
                <SiteLink href="#help" $basis={183} $pad={70}>Explore Help Articles</SiteLink>
                <SiteLink href="#forums" $basis={172} $pad={70}>Community Forums</SiteLink>
                <SiteLink href="#ask" $basis={140} $pad={60}>Ask a Question</SiteLink>
                <SiteLink href="#contribute" $basis={83}>Contribute</SiteLink>
                <SearchBox>
                    <input aria-label="Search" placeholder="Search questions, articles, or topi" />
                    <IconButton aria-label="Search"><Search size={22} color="#111" /></IconButton>
                </SearchBox>
                <SiteLink href="#user" $basis={108} $pad={30}>Colleen Stadnick</SiteLink>
                <UserBadge>C</UserBadge>
            </SiteHeader>
            <Answer>
                <Paragraph>
                    What are your current server settings for the account ?<br />
                    Suggest you post animage of the Account Settings &gt; Server SEttings page<br />
                    Or Help &gt; Troubleshooting Information<br />
                    Scroll down to 'Mail and News Accounts' section<br />
                    Copy all the data and paste it into this forum question.
                </Paragraph>
                <Paragraph>Have you accessed the saved password in Thunderbird and updated the information ?</Paragraph>
                <Steps>
                    {steps.map((step) => <li key={step}>{step}</li>)}
                </Steps>
            </Answer>
            <Replies>
                <Helpful>
                    <span>Helpful?</span>
                    <IconButton aria-label="Helpful">
                        <svg width="18" height="18" viewBox="0 0 18 18"><ThumbArt /></svg>
                    </IconButton>
                    <IconButton aria-label="Not helpful">
                        <svg width="18" height="18" viewBox="0 0 18 18"><g transform="rotate(180 9 9)"><ThumbArt /></g></svg>
                    </IconButton>
                </Helpful>
                <SolvedBar>
                    Did this reply solve your problem?
                    <SolvedButton>Solved the problem</SolvedButton>
                </SolvedBar>
                <ReplyTitle>Post a Reply</ReplyTitle>
                <EditorTools>
                    <ToolButton aria-label="Bold">B</ToolButton>
                    <ToolButton aria-label="Italic" $italic>i</ToolButton>
                    <Divider $tall $color="#f0f0f4" />
                    <ToolButton aria-label="Link"><Link size={22} /></ToolButton>
                    <Divider $tall $color="#f0f0f4" />
                    <ToolButton aria-label="Numbered list"><ListOrdered size={22} /></ToolButton>
                    <ToolButton aria-label="Bulleted list"><List size={22} strokeWidth={2.5} /></ToolButton>
                    <Divider $tall $color="#f0f0f4" />
                    <CommonResponses>Common responses</CommonResponses>
                </EditorTools>
                <ReplyBox aria-label="Reply" />
            </Replies>
        </Page>
    );
}

function PinnedApps({ width }) {
    return pinned.map((app, i) => (
        <BarCell key={i} $width={width} $running={app.running} $active={app.active} $many={app.many} aria-label={app.name}>
            {app.icon && <svg width="24" height="24" viewBox="0 0 24 24" fill="none" aria-hidden="true">{appIcons[app.icon]}</svg>}
        </BarCell>
    ));
}

function Taskbar() {
    return (
        <Bar>
            <BarCell $width={49} aria-label="Start"><WindowsLogo /></BarCell>
            <SearchField>
                <Lens size={18} strokeWidth={1.6} />
                <input placeholder="Type here to search" aria-label="Search" />
                <PianoArt />
            </SearchField>
            <BarCell $width={51} aria-label="Task view"><TaskViewIcon /></BarCell>
            <PinnedApps width={44} />
            <Tray $end={18}>
                <Weather>
                    <svg width="24" height="26" viewBox="0 0 24 26"><circle cx="11" cy="14" r="10" fill="#f99a1c" /><circle cx="16" cy="7" r="6" fill="#c42b1c" /><text x="16" y="10" fontSize="8" textAnchor="middle" fill="#fff" fontFamily={uiFont}>1</text></svg>
                    45°F
                </Weather>
                <ChevronUp size={16} />
                <svg width="17" height="14" viewBox="0 0 17 14"><path d="M4 12a4 4 0 0 1 0-7 5 5 0 0 1 9 0 3.500 3.500 0 0 1 0 7z" fill="#a8a8a8" /><path d="m1 0 15 14" stroke="#fff" strokeWidth="1.3" /></svg>
                <svg width="17" height="14" viewBox="0 0 17 14" fill="none" stroke="#fff" strokeWidth="1.2"><path d="M5 2h11v8H4V6M10 10v3M6 13.300h8M1 1h4v4H1zM3 5v8" /></svg>
                <svg width="17" height="14" viewBox="0 0 17 14" fill="none" stroke="#fff" strokeWidth="1.2"><path d="M1 5h2.500L7 2v10L3.500 9H1zM9.500 5c1 1 1 3 0 4" /><path d="M11.500 3.500c2 2 2 5 0 7M13.700 2c2.500 3 2.500 7 0 10" stroke="#999" /></svg>
                <Clock>12:51 PM<br />1/27/2026</Clock>
                <Notifications aria-label="Notifications">
                    <svg width="18" height="18" viewBox="0 0 18 18"><path d="M1 1h15v12H7l-3 3v-3H1z" fill="#fff" /><path d="M3.500 4.500h10M3.500 7h10M3.500 9.500h6" stroke="#464646" /><circle cx="14" cy="13" r="3.5" fill="#fff" stroke="#464646" /></svg>
                </Notifications>
            </Tray>
        </Bar>
    );
}

function SecondTaskbar() {
    return (
        <Bar $wide>
            <BarCell $width={48} aria-label="Start"><WindowsLogo /></BarCell>
            <BarCell $width={49} aria-label="Search"><Lens size={24} /></BarCell>
            <BarCell $width={49} aria-label="Task view"><TaskViewIcon /></BarCell>
            <PinnedApps width={49} />
            <Tray>
                <Clock>12:51 PM<br />1/27/2026</Clock>
            </Tray>
        </Bar>
    );
}

export default function App() {
    return (
        <>
            <GlobalStyle />
            <Desktop>
                <Monitor>
                    <Thunderbird />
                    <Taskbar />
                </Monitor>
                <Monitor>
                    <ChromeWindow />
                    <SecondTaskbar />
                </Monitor>
            </Desktop>
        </>
    );
}
